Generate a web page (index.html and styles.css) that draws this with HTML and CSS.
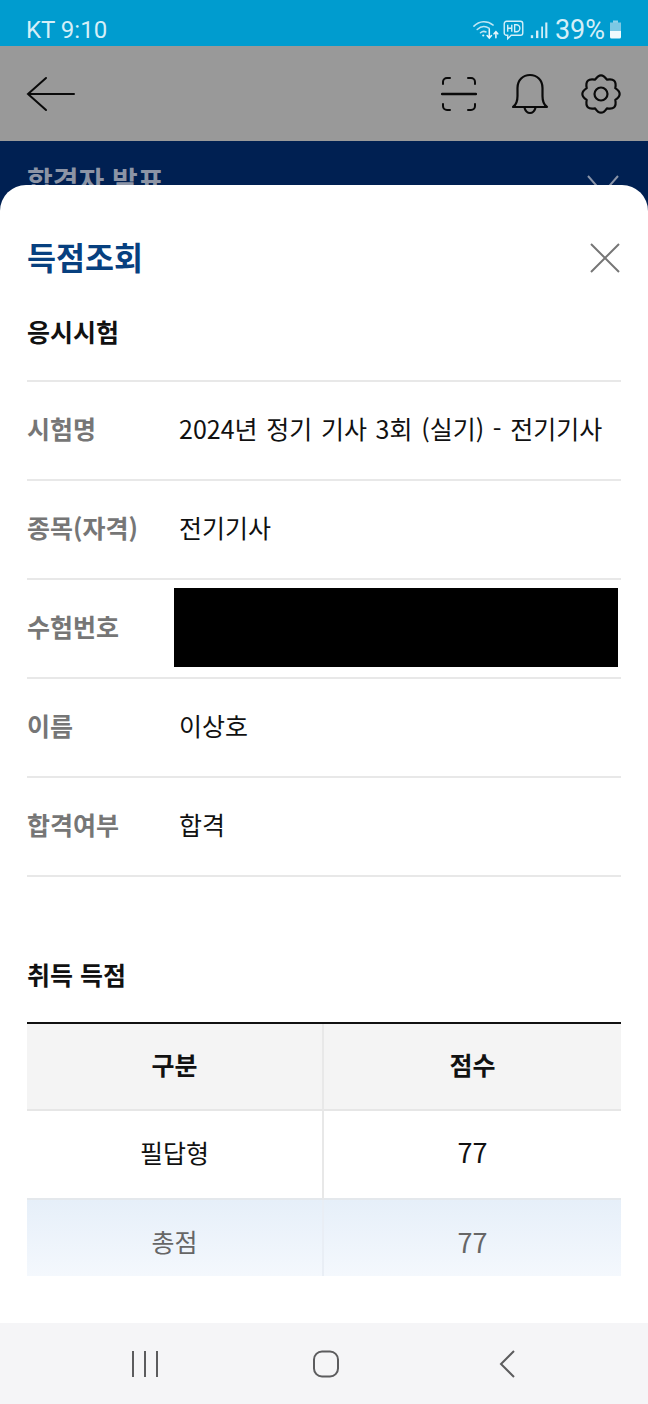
FILE: index.html
```html
<!DOCTYPE html>
<html lang="ko">
<head>
<meta charset="utf-8">
<title>득점조회</title>
<link rel="stylesheet" href="styles.css">
</head>
<body>
<div class="phone">
  <div class="status">
    <span class="status-left">KT 9:10</span>
    <div class="status-right">
      <svg class="st-wifi" width="28" height="22" viewBox="0 0 24 20" fill="none" stroke="#bfe6f4" stroke-width="1.4" stroke-linecap="round"><path d="M1 6.500C6 1.500 13 1.200 18.500 5.500"/><path d="M4 9.500C7.500 6.300 11.500 6.200 15 8.500"/><path d="M7 12.500C8.800 11 10.500 11 12 11.800"/><circle cx="9.500" cy="15" r="1" fill="#dff3fa" stroke="none"/><path d="M15 9.500V17M13 15l2 2.300 2-2.300" stroke="#e8f7fc"/><path d="M21 17V11.500M19.300 13.500L21 11.500l1.700 2" stroke="#e8f7fc"/></svg>
      <svg class="st-hd" width="21" height="22" viewBox="0 0 18 19" fill="none" stroke="#d5eff8" stroke-width="1.200"><path d="M3 2h12a2 2 0 0 1 2 2v8a2 2 0 0 1-2 2H7l-3 3v-3H3a2 2 0 0 1-2-2V4a2 2 0 0 1 2-2z"/><path d="M4 5v6M4 8h3.500M7.500 5v6M10 5v6h1.500a3 3 0 0 0 0-6z"/></svg>
      <svg class="st-signal" width="19" height="22" viewBox="0 0 16 19" fill="#d5eff8"><rect x="0.500" y="14" width="2" height="2.500"/><rect x="5" y="10" width="2" height="6.500"/><rect x="9.500" y="6.500" width="1.500" height="10"/><rect x="13" y="3" width="1.800" height="13.500"/></svg>
      <span class="status-pct">39%</span>
      <svg class="st-batt" width="13" height="20" viewBox="0 0 12 20"><rect x="3.500" y="0.500" width="5" height="2.500" fill="#8fd0e8"/><rect x="0.500" y="2.500" width="11" height="11" fill="#7cc8e4"/><path d="M0.500 11h11v6a1.500 1.500 0 0 1-1.500 1.500H2A1.500 1.500 0 0 1 0.500 17z" fill="#f0fafd"/></svg>
    </div>
  </div>

  <header class="appbar">
    <svg class="ic-back" width="50" height="36" viewBox="0 0 50 36" fill="none" stroke="#0a0a0a" stroke-width="2" stroke-linecap="round"><path d="M20 2L2 18l18 16M2 18h46"/></svg>
    <div class="appbar-actions">
      <svg width="36" height="36" viewBox="0 0 36 36" fill="none" stroke="#0a0a0a" stroke-width="2" stroke-linecap="round"><path d="M2 8V6a4 4 0 0 1 4-4h3M27 2h3a4 4 0 0 1 4 4v2M2 28v2a4 4 0 0 0 4 4h3M27 34h3a4 4 0 0 0 4-4v-2"/><path d="M1 18h34" stroke-width="2.400"/></svg>
      <svg width="38" height="42" viewBox="0 0 38 42" fill="none" stroke="#0a0a0a" stroke-width="2.200" stroke-linejoin="round"><path d="M2 34c3-2 4.500-6 4.500-11v-8C6.500 7 12 2 19 2s12.500 5 12.500 13v8c0 5 1.500 9 4.500 11z"/><path d="M13.500 35c1 3 3 5 5.500 5s4.500-2 5.500-5"/></svg>
      <svg class="ic-gear" width="40" height="42" viewBox="0 0 40 42" fill="none" stroke="#0a0a0a" stroke-width="2.200" stroke-linejoin="round"><path d="M14.100 6.700Q20 -2 25.900 6.700Q36.300 4.700 34.300 15.100Q43 21 34.300 26.900Q36.300 37.300 25.900 35.300Q20 44 14.100 35.300Q3.700 37.300 5.700 26.900Q-3 21 5.700 15.100Q3.700 4.700 14.100 6.700z"/><circle cx="20" cy="21" r="6.500"/></svg>
    </div>
  </header>

  <div class="backdrop">
    <div class="notice">
      <span class="notice-title">합격자 발표</span>
      <svg class="notice-x" width="36" height="36" viewBox="0 0 36 36" fill="none" stroke="#8a94a8" stroke-width="2"><path d="M2 2l28 32M32 2L4 34"/></svg>
    </div>

    <main class="sheet">
      <div class="sheet-head">
        <h1 class="sheet-title">득점조회</h1>
        <svg class="sheet-close" width="32" height="32" viewBox="0 0 32 32" fill="none" stroke="#767676" stroke-width="2"><path d="M2 2l28 28M30 2L2 30"/></svg>
      </div>

      <h2 class="section-title section-first">응시시험</h2>
      <dl class="info">
        <div class="info-row"><dt>시험명</dt><dd class="value">2024년 정기 기사 3회 (실기) - 전기기사</dd></div>
        <div class="info-row"><dt>종목(자격)</dt><dd class="value">전기기사</dd></div>
        <div class="info-row"><dt>수험번호</dt><dd class="redacted"></dd></div>
        <div class="info-row"><dt>이름</dt><dd class="value">이상호</dd></div>
        <div class="info-row"><dt>합격여부</dt><dd class="value">합격</dd></div>
      </dl>

      <h2 class="section-title section-second">취득 득점</h2>
      <table class="score">
        <thead><tr><th>구분</th><th>점수</th></tr></thead>
        <tbody>
          <tr class="row-body"><td>필답형</td><td class="num">77</td></tr>
          <tr class="row-total"><td>총점</td><td class="num">77</td></tr>
        </tbody>
      </table>
    </main>
  </div>

  <nav class="navbar">
    <svg width="28" height="28" viewBox="0 0 28 28" fill="none" stroke="#5c5c5e" stroke-width="2"><path d="M2 1v26M14 1v26M26 1v26"/></svg>
    <svg class="nav-home" width="28" height="28" viewBox="0 0 28 28" fill="none" stroke="#5c5c5e" stroke-width="2"><rect x="2" y="1.500" width="24" height="25" rx="8"/></svg>
    <svg class="nav-back" width="18" height="28" viewBox="0 0 18 28" fill="none" stroke="#5c5c5e" stroke-width="2"><path d="M16 1L3 14l13 13"/></svg>
  </nav>
</div>
</body>
</html>
```
FILE: styles.css
```css
* { box-sizing: border-box; }
html, body { margin: 0; padding: 0; }
body { font-family: "Noto Sans CJK KR", "Noto Sans", sans-serif; background: #fff; }
svg { display: block; flex: none; }

.phone { width: 648px; height: 1404px; display: flex; flex-direction: column; overflow: hidden; }

.status { height: 46px; flex: none; background: #009ccf; display: flex; align-items: center; justify-content: space-between; padding: 13px 26px 0 26px; color: #d5eff8; }
.status-left { font-family: Roboto, sans-serif; font-size: 24px; line-height: 30px; }
.status-right { display: flex; align-items: center; }
.st-wifi { margin-right: 3px; }
.st-hd { margin-right: 6px; }
.st-signal { margin-right: 6px; }
.status-pct { font-family: Roboto, sans-serif; font-size: 27px; line-height: 30px; margin-right: 4px; }

.appbar { height: 95px; flex: none; background: #999; display: flex; align-items: center; justify-content: space-between; padding: 0 26px; }
.appbar-actions { display: flex; align-items: center; gap: 34px; margin-right: 1px; }
.appbar-actions .ic-gear { margin-left: -2px; }

.backdrop { flex: 1; min-height: 0; background: #002052; display: flex; flex-direction: column; }
.notice { height: 44px; flex: none; overflow: hidden; display: flex; justify-content: space-between; align-items: flex-start; padding: 22px 26px 0 27px; }
.notice-title { font-size: 28px; line-height: 34px; font-weight: 700; color: #8c94a5; }
.notice-x { margin-top: 11px; }

.sheet { flex: 1; background: #fff; border-radius: 26px 26px 0 0; padding: 0 27px; display: flex; flex-direction: column; }
.sheet-head { display: flex; justify-content: space-between; align-items: center; padding-top: 50px; height: 96px; }
.sheet-title { margin: 0 0 4px; font-size: 31.500px; line-height: 46px; font-weight: 700; color: #07407f; }

.section-title { margin: 0; font-size: 25px; line-height: 36px; font-weight: 700; color: #111; }
.section-first { margin-top: 32px; }
.section-second { margin-top: 79px; }

.info { margin: 31px 0 0; border-top: 2px solid #e8e8e8; }
.info-row { height: 99px; display: flex; align-items: center; border-bottom: 2px solid #e8e8e8; }
.info-row dt { width: 152px; flex: none; padding-bottom: 6px; font-size: 25px; font-weight: 700; color: #767676; }
.info-row .value { margin: 0; padding-bottom: 6px; font-size: 25px; word-spacing: 1.700px; color: #111; }
.info-row .redacted { width: 444px; height: 79px; margin: -2px 0 0 -5px; background: #000; }

.score { width: 100%; margin-top: 30px; border-collapse: separate; border-spacing: 0; border-top: 2px solid #111; table-layout: fixed; font-size: 25px; text-align: center; }
.score th { height: 87px; background: #f4f4f4; font-weight: 700; color: #111; padding: 0 0 6px; border-bottom: 2px solid #e6e6e6; }
.score td { padding: 0; }
.score th:first-child, .score td:first-child { border-right: 2px solid #e8e8e8; }
.score .num { font-size: 27px; }
.row-body td { height: 89px; padding-bottom: 6px; color: #111; border-bottom: 2px solid #e4e8ec; }
.row-total { background: linear-gradient(#e6eff9, #f4f8fd); }
.row-total td { height: 76px; padding-top: 6px; color: #666; }
.score .row-total td:first-child { border-right-color: #e9eef5; }

.navbar { height: 81px; flex: none; background: #f5f5f7; display: flex; align-items: center; padding: 0 131px; }
.nav-home { margin-left: 153px; }
.nav-back { margin-left: 158px; }
```
